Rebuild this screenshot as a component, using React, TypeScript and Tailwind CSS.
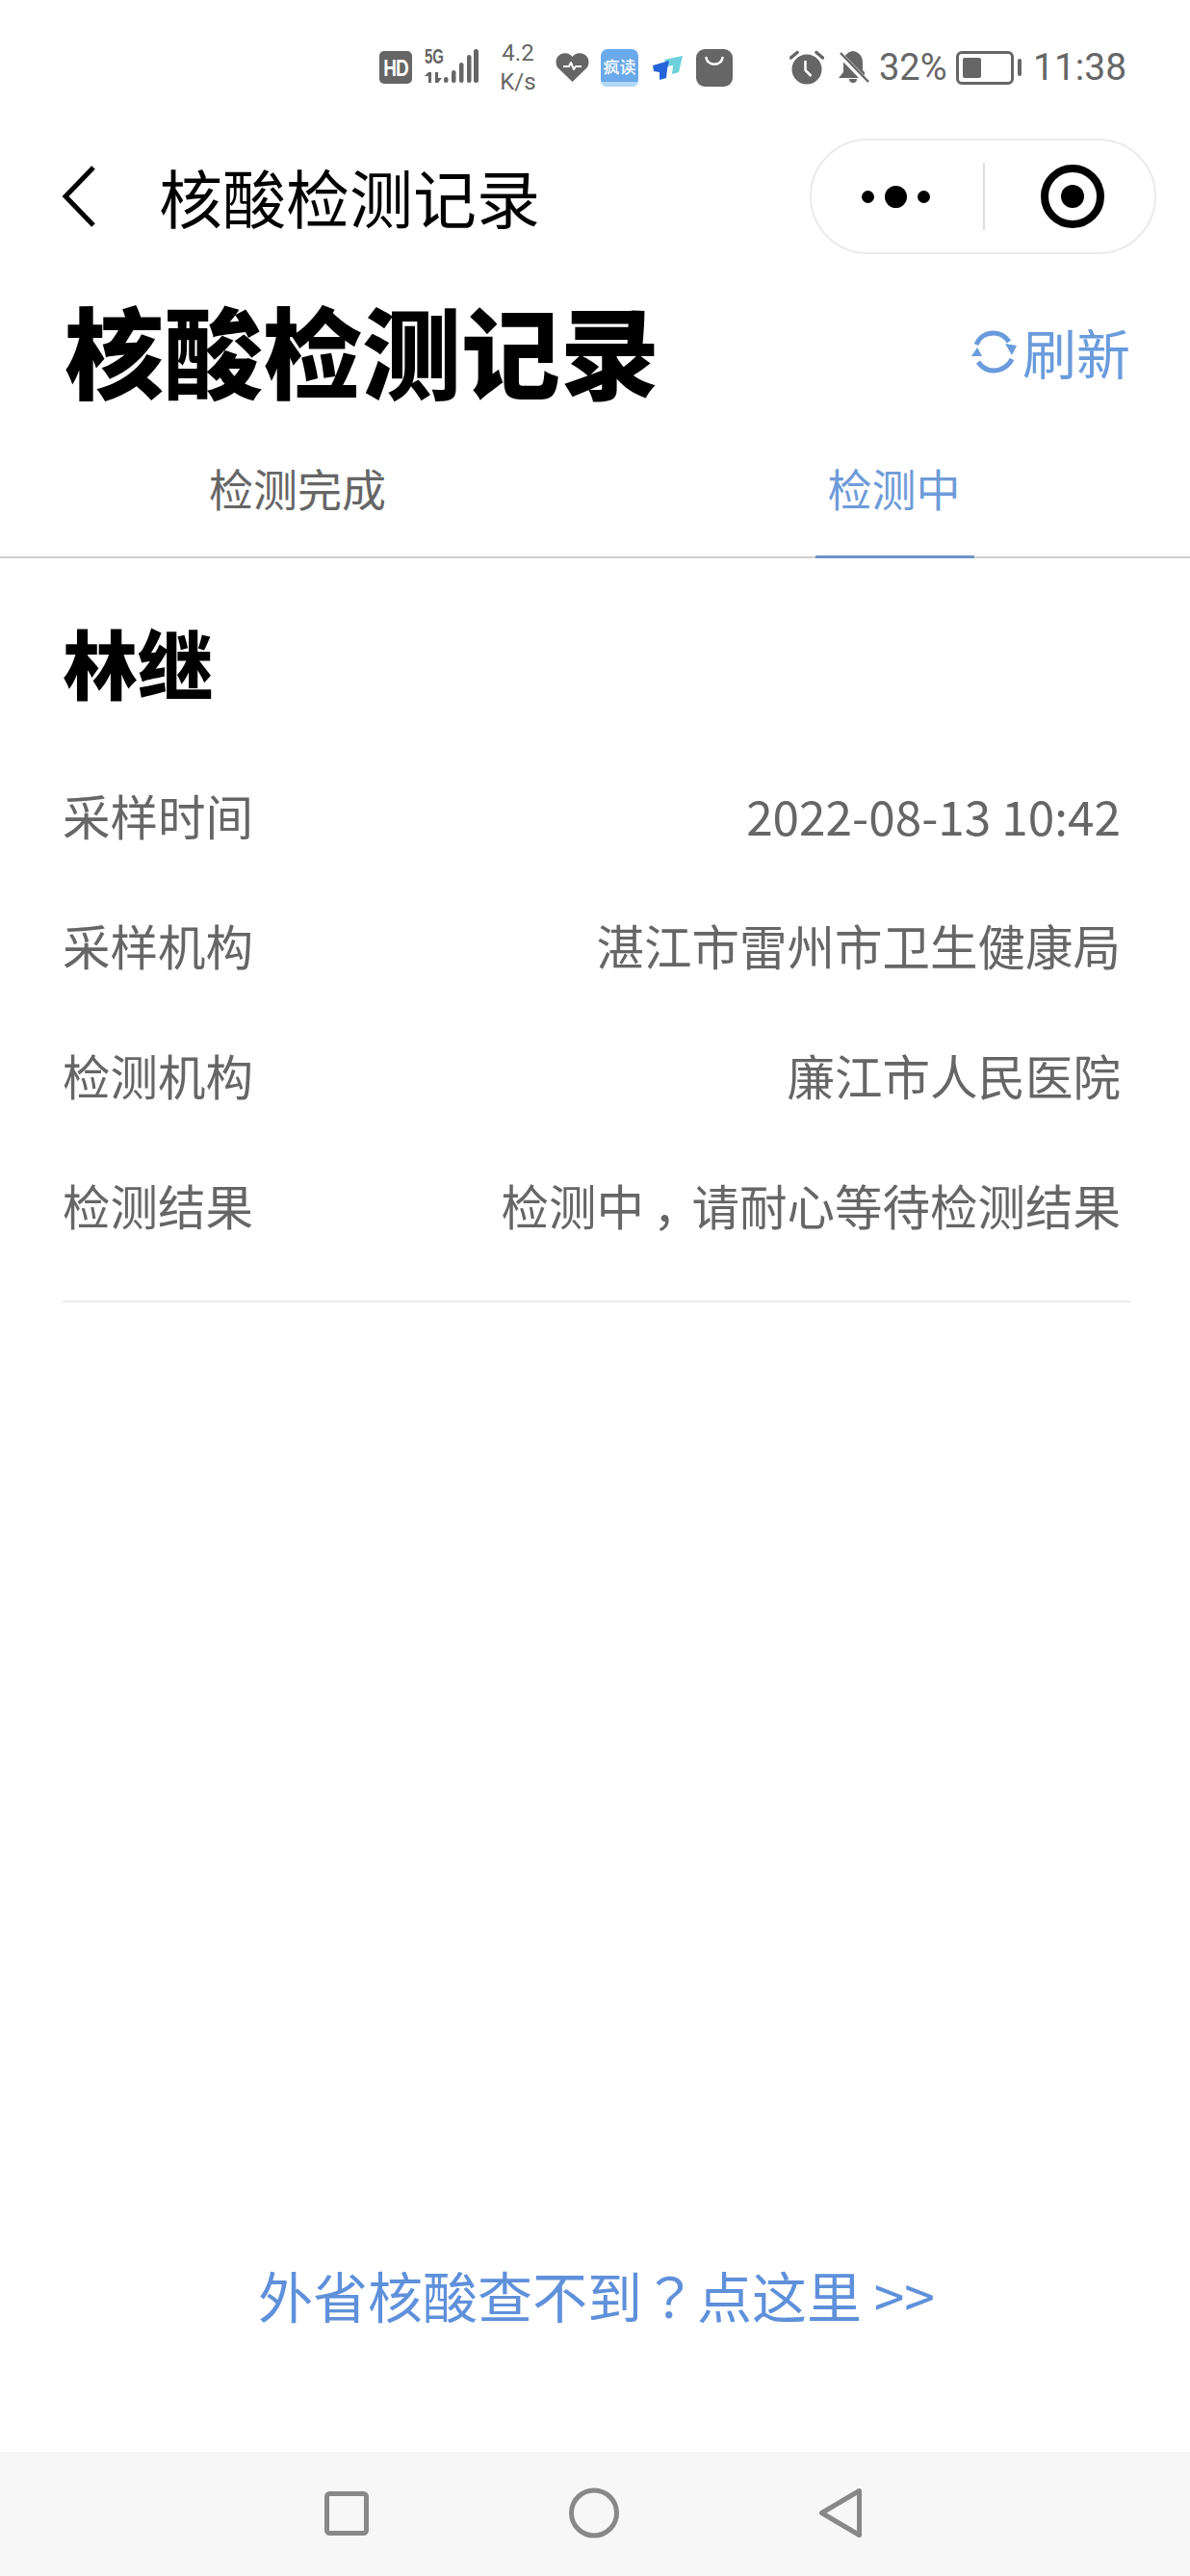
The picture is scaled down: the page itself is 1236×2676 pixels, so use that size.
import { Fragment, type ReactNode } from 'react';

const rows: { label: string; value: ReactNode }[] = [
  { label: '采样时间', value: '2022-08-13 10:42' },
  { label: '采样机构', value: '湛江市雷州市卫生健康局' },
  { label: '检测机构', value: '廉江市人民医院' },
  {
    label: '检测结果',
    value: (
      <>
        检测中<span className="inline-block w-[1em] text-center [font-feature-settings:'palt']">，</span>请耐心等待检测结果
      </>
    ),
  },
];

function StatusBar() {
  return (
    <div className="flex h-[130px] items-center pl-[394px] pt-[10px] text-[#666] [font-family:Roboto,sans-serif]">
      {/* HD */}
      <div className="flex h-[34px] w-[34px] items-center justify-center rounded-[5px] bg-[#666] text-[19px] font-bold leading-none text-white [font-family:'Liberation_Sans',sans-serif]">
        <span className="scale-y-125 tracking-[-1px]">HD</span>
      </div>
      {/* 5G + signal */}
      <svg className="ml-[13px]" width="57" height="48" viewBox="0 -3 57 48">
        <text x="0" y="17" fontSize="22" fontWeight="700" fill="#666" fontFamily="Liberation Sans" textLength="20" lengthAdjust="spacingAndGlyphs">5G</text>
        <path d="M4 26h3v11H4zM0 30l4-4v4zM11 26h3v11h-3zM14 32l4 0-4 5z" fill="#666" />
        <rect x="20" y="31" width="4.500" height="6" rx="2.250" fill="#666" />
        <rect x="28" y="24" width="4.500" height="13" rx="2.250" fill="#666" />
        <rect x="36" y="16" width="4.500" height="21" rx="2.250" fill="#666" />
        <rect x="44" y="8" width="4.500" height="29" rx="2.250" fill="#666" />
        <rect x="51" y="2" width="5" height="35" rx="2.500" fill="#666" />
      </svg>
      <div className="ml-[21px] flex w-[38px] flex-col items-center text-[24px] leading-[30px]">
        <span>4.2</span>
        <span>K/s</span>
      </div>
      {/* heart */}
      <svg className="ml-[20px]" width="35" height="32" viewBox="0 0 35 32">
        <path d="M17.5 31 3 17C-1 12.500 0 5 5 2.500 10 0 15 1.500 17.500 5 20 1.500 25 0 30 2.500 35 5 36 12.500 32 17Z" fill="#666" />
        <path d="M8 15h6l2-4 3 7 2-3h6" fill="none" stroke="#fff" strokeWidth="2" strokeLinejoin="round" />
      </svg>
      {/* 疯读 */}
      <div className="relative ml-[12px] flex h-[39px] w-[39px] items-center justify-center overflow-hidden rounded-[7px] bg-[#6aa9ea] pb-[3px] text-[17px] font-medium leading-none text-white [font-family:'Noto_Sans_CJK_SC',sans-serif]">
        疯读
        <div className="absolute inset-x-0 bottom-0 h-[5px] bg-[#b0d8f5]" />
      </div>
      {/* blue arrow */}
      <svg className="ml-[15px]" width="31" height="25" viewBox="0 0 31 25">
        <path d="M12 4 31 0 27 17 20 19 21 10 15 11Z" fill="#6cd0dc" />
        <path d="M0 10 17 5 15 14 14 23 7 25 7 17 1 16Z" fill="#2563d8" />
      </svg>
      {/* bag */}
      <div className="ml-[14px] h-[39px] w-[38px] rounded-[9px] bg-[#666]">
        <svg width="38" height="39" viewBox="0 0 38 39">
          <path d="M10.500 9c1.500 9 15.500 9 17 0" fill="none" stroke="#fff" strokeWidth="2.500" strokeLinecap="round" />
        </svg>
      </div>
      {/* alarm */}
      <svg className="ml-[59px]" width="36" height="36" viewBox="0 0 36 36">
        <circle cx="18" cy="20" r="15.500" fill="#666" />
        <path d="M1.500 8 8 2.500M34.500 8 28 2.500" stroke="#666" strokeWidth="3.500" strokeLinecap="round" />
        <path d="M16.500 11v10l6 6" fill="none" stroke="#fff" strokeWidth="2.500" />
      </svg>
      {/* muted bell */}
      <svg className="ml-[14px]" width="33" height="36" viewBox="0 0 33 36">
        <path d="M16 1c-6 1-10 5-10 12v10l-5 6h27v-6l-2-2V13c0-7-4-11-10-12ZM12 30h8a4 4 0 0 1-8 0Z" fill="#666" />
        <path d="M2 4 31 34" stroke="#fff" strokeWidth="6" />
        <path d="M3 3 32 33" stroke="#666" strokeWidth="2.500" />
      </svg>
      <span className="ml-[10px] w-[70px] text-[38px] leading-none">32%</span>
      {/* battery */}
      <div className="ml-[10px] flex items-center">
        <div className="h-[35px] w-[60px] rounded-[6px] border-[3px] border-[#666] p-[4px]">
          <div className="h-full w-[19px] rounded-[2px] bg-[#666]" />
        </div>
        <div className="ml-[4px] h-[18px] w-[4px] rounded-[2px] bg-[#666]" />
      </div>
      <span className="ml-[12px] text-[39px] leading-none">11:38</span>
    </div>
  );
}

function NavBar() {
  return (
    <div className="flex h-[148px] items-center pl-[64px] pr-[35px]">
      <svg width="36" height="64" viewBox="0 0 36 64" className="shrink-0">
        <path d="M33 2 4 32l29 30" fill="none" stroke="#000" strokeWidth="5" />
      </svg>
      <div className="mb-[3px] ml-[65px] text-[66px] leading-none text-black">核酸检测记录</div>
      <div className="ml-auto flex h-[120px] w-[360px] items-center rounded-[60px] border-2 border-[#eaeaea] bg-white">
        <div className="flex w-[178px] items-center justify-center gap-[11px] pr-[4px]">
          <div className="h-[13px] w-[13px] rounded-full bg-black" />
          <div className="h-[23px] w-[23px] rounded-full bg-black" />
          <div className="h-[13px] w-[13px] rounded-full bg-black" />
        </div>
        <div className="h-[70px] w-[2px] bg-[#ddd]" />
        <div className="flex flex-1 items-center justify-center pl-[6px]">
          <div className="flex h-[66px] w-[66px] items-center justify-center rounded-full border-[8px] border-black">
            <div className="h-[24px] w-[24px] rounded-full bg-black" />
          </div>
        </div>
      </div>
    </div>
  );
}

export default function App() {
  return (
    <div className="flex h-[2676px] w-[1236px] flex-col overflow-hidden bg-white [font-family:'Noto_Sans_CJK_SC',sans-serif]">
      <StatusBar />
      <NavBar />

      <div className="flex h-[176px] items-center justify-between pl-[67px] pr-[62px]">
        <h1 className="mb-[7px] text-[103px] font-black leading-none text-black">核酸检测记录</h1>
        <div className="mb-[2px] flex items-center text-[56px] leading-none text-[#6a9bdc]">
          <svg width="48" height="45" viewBox="0 0 48 45" className="mr-[5px]">
            <path d="M5 15C8 7 15 3 23 3c7 0 12 3 16 9M42 30c-3 7-11 12-19 12-7 0-12-3-16-9" fill="none" stroke="#6a9bdc" strokeWidth="5" />
            <path d="M35 14 47 16 42 26ZM0 27 11 27 6 18Z" fill="#6a9bdc" />
          </svg>
          刷新
        </div>
      </div>

      {/* tabs */}
      <div className="grid h-[126px] grid-cols-2 border-b-2 border-[#cfcfcf] text-[46px] leading-none">
        <div className="flex items-center justify-center pb-[21px] text-[#666]">检测完成</div>
        <div className="relative flex items-center justify-center pb-[21px] pl-[3px] text-[#6f9bd8]">
          检测中
          <div className="absolute -bottom-[2px] left-[229px] h-[3px] w-[165px] bg-[#6f94c8]" />
        </div>
      </div>

      <div className="pl-[65px] pr-[62px]">
        <div className="mt-[62px] text-[78px] font-black leading-[90px] text-black">林继</div>
        <div className="mt-[47px] grid grid-cols-[auto_1fr] border-b-2 border-[#ececec] pb-[32px] text-[49.500px] leading-[135px] text-[#666]">
          {rows.map((r) => (
            <Fragment key={r.label}>
              <div>{r.label}</div>
              <div className="pr-[10px] text-right">{r.value}</div>
            </Fragment>
          ))}
        </div>
      </div>

      <div className="mt-auto pb-[135px] pl-[3px] text-center text-[57px] leading-none text-[#5f90da]">
        外省核酸查不到<span className="[font-family:'Noto_Sans_CJK_TC',sans-serif]">？</span>点这里 &gt;&gt;
      </div>

      {/* android nav */}
      <div className="h-[129px] bg-[#f7f7f7]">
        <svg width="1236" height="129" viewBox="0 0 1236 129">
          <rect x="339.500" y="43.500" width="41" height="41" rx="3" fill="none" stroke="#888" strokeWidth="5" />
          <circle cx="617" cy="63.500" r="23.500" fill="none" stroke="#888" strokeWidth="5" />
          <path d="M853.500 63.500 892.500 40.500V86.500Z" fill="none" stroke="#888" strokeWidth="5" strokeLinejoin="round" />
        </svg>
      </div>
    </div>
  );
}
